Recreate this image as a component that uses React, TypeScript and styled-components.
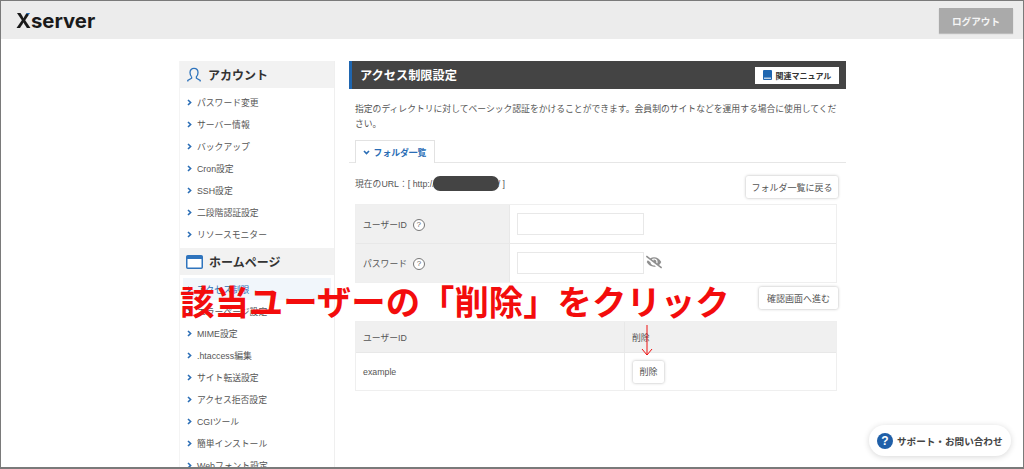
import React from 'react';
import styled, { createGlobalStyle } from 'styled-components';
import { FaEyeSlash } from 'react-icons/fa';

const accountMenu = ['パスワード変更', 'サーバー情報', 'バックアップ', 'Cron設定', 'SSH設定', '二段階認証設定', 'リソースモニター'];
const homeMenu = ['アクセス制限', 'エラーページ設定', 'MIME設定', '.htaccess編集', 'サイト転送設定', 'アクセス拒否設定', 'CGIツール', '簡単インストール', 'Webフォント設定'];

const GlobalStyle = createGlobalStyle`
  html, body {
    margin: 0;
    padding: 0;
    background: #fff;
    overflow: hidden;
  }
  * { box-sizing: border-box; }
`;

const Frame = styled.div`
  position: relative;
  width: 1024px;
  height: 469px;
  overflow: hidden;
  display: flex;
  flex-direction: column;
  background: #fff;
  border: 1px solid #7a7a7a;
  border-bottom-width: 2px;
  font-family: "Liberation Sans", "Noto Sans CJK JP", sans-serif;
  color: #555;
  font-size: 8.8px;
`;

const Header = styled.header`
  flex: none;
  height: 38px;
  background: #ececec;
  display: flex;
  align-items: center;
  justify-content: space-between;
  padding: 0 10px 0 15px;
`;

const Logo = styled.div`
  font-family: "Inter", "Liberation Sans", sans-serif;
  font-size: 20.3px;
  font-weight: 700;
  color: #1a1a1a;
`;

const LogoX = styled.span`
  background: linear-gradient(215deg, #1f66b0 0 24%, #1a1a1a 25%);
  -webkit-background-clip: text;
  background-clip: text;
  color: transparent;
`;

const LogoutButton = styled.div`
  width: 74px;
  height: 25px;
  margin-top: 1px;
  background: #aaaaaa;
  color: #f5f5f5;
  font-size: 9.6px;
  font-weight: 700;
  display: flex;
  align-items: center;
  justify-content: center;
  box-shadow: 0 1px 1px rgba(0, 0, 0, 0.2);
`;

const Body = styled.div`
  display: flex;
  align-items: flex-start;
  gap: 14px;
  padding: 22px 0 0 178px;
`;

const Sidebar = styled.nav`
  flex: none;
  width: 156px;
  border-right: 1px solid #efefef;
  border-left: 1px solid #f4f4f4;
`;

const SectionHead = styled.div`
  height: 27px;
  background: #f2f2f2;
  display: flex;
  align-items: center;
  gap: 6px;
  padding-left: 6px;
  font-size: 12px;
  font-weight: 700;
  color: #333;
`;

const MenuList = styled.ul`
  list-style: none;
  margin: 0;
  padding: 3px 0 3px;
`;

const MenuItem = styled.li<{ $active?: boolean }>`
  height: 22px;
  margin: 0 3px;
  padding-left: 4px;
  display: flex;
  align-items: center;
  gap: 5px;
  color: ${(p) => (p.$active ? '#2a6db5' : '#555')};
  background: ${(p) => (p.$active ? '#f1f6fb' : 'transparent')};
`;

const Main = styled.main`
  flex: none;
  width: 497px;
`;

const TitleBar = styled.div`
  height: 28px;
  background: #444;
  border-left: 3px solid #1f66b0;
  display: flex;
  align-items: center;
  justify-content: space-between;
  padding: 0 7px 0 8px;
  color: #fff;
  font-size: 12.2px;
  font-weight: 700;
`;

const ManualButton = styled.div`
  width: 84px;
  height: 17px;
  background: #fff;
  color: #333;
  font-size: 8px;
  font-weight: 700;
  display: flex;
  align-items: center;
  justify-content: center;
  gap: 4px;
`;

const Description = styled.p`
  margin: 13px 8px 0 6px;
  line-height: 15px;
`;

const Tabs = styled.div`
  margin-top: 8px;
  height: 23px;
  border-bottom: 1px solid #e6e6e6;
  padding-left: 6px;
`;

const Tab = styled.div`
  width: 80px;
  height: 23px;
  border: 1px solid #e2e2e2;
  border-bottom: 0;
  background: #fff;
  color: #2a6db5;
  font-weight: 700;
  display: flex;
  align-items: center;
  justify-content: center;
  gap: 5px;
`;

const UrlRow = styled.div`
  display: flex;
  justify-content: space-between;
  align-items: flex-start;
  padding: 13px 8px 0 6px;
`;

const UrlText = styled.div`
  display: flex;
  align-items: center;
  height: 15px;
`;

const Redaction = styled.span`
  display: inline-block;
  width: 66px;
  height: 15px;
  margin: 0 -1px 0 -2px;
  border-radius: 7px;
  background: #444;
`;

const Button = styled.div<{ $w: number }>`
  width: ${(p) => p.$w}px;
  height: 22px;
  background: #fff;
  border-radius: 2px;
  color: #555;
  font-size: 9px;
  display: flex;
  align-items: center;
  justify-content: center;
  box-shadow: 0 0 3px rgba(0, 0, 0, 0.3);
`;

const Table = styled.div<{ $mt: number }>`
  margin: ${(p) => p.$mt}px 9px 0 6px;
  border: 1px solid #efefef;
`;

const Row = styled.div<{ $h: number; $first: number }>`
  display: grid;
  grid-template-columns: ${(p) => p.$first}px 1fr;
  height: ${(p) => p.$h}px;
  & + & { border-top: 1px solid #e8e8e8; }
`;

const LabelCell = styled.div`
  background: #f0f0f0;
  display: flex;
  align-items: center;
  gap: 6px;
  padding-left: 7px;
  border-right: 1px solid #e8e8e8;
`;

const HeadCell = styled(LabelCell)<{ $last?: boolean }>`
  border-right: ${(p) => (p.$last ? '0' : '1px solid #e8e8e8')};
`;

const PlainCell = styled.div<{ $line?: boolean }>`
  display: flex;
  align-items: center;
  padding-left: 7px;
  border-right: ${(p) => (p.$line ? '1px solid #ececec' : '0')};
`;

const Help = styled.span`
  width: 12px;
  height: 12px;
  margin-top: 2px;
  border-radius: 50%;
  border: 1px solid #777;
  background: #fff;
  color: #666;
  font-size: 8px;
  line-height: 10px;
  text-align: center;
`;

const Input = styled.div`
  width: 127px;
  height: 22px;
  border: 1px solid #e8e8e8;
  background: #fff;
`;

const EyeIcon = styled(FaEyeSlash)`
  margin: -2px 0 0 2px;
  width: 16px;
  height: 14px;
  color: #8f8f8f;
`;

const NextRow = styled.div`
  display: flex;
  justify-content: flex-end;
  padding: 4px 8px 0 0;
`;

const DeleteButton = styled(Button)`
  margin-left: 1px;
`;

const Callout = styled.div`
  position: absolute;
  left: 179px;
  top: 277px;
  font-family: "Noto Sans CJK JP", sans-serif;
  font-size: 34.4px;
  line-height: 44px;
  font-weight: 700;
  white-space: nowrap;
  color: #f30c0c;
`;

const CalloutArrow = styled.svg`
  position: absolute;
  left: 639px;
  top: 324px;
  width: 14px;
  height: 32px;
`;

const SupportPill = styled.div`
  position: absolute;
  right: 12px;
  bottom: 11px;
  width: 142px;
  height: 31px;
  border-radius: 16px;
  background: #fff;
  box-shadow: 0 1px 6px rgba(0, 0, 0, 0.16);
  display: flex;
  align-items: center;
  gap: 4px;
  padding-left: 8px;
  font-size: 9.6px;
  font-weight: 700;
  color: #444;
`;

const SupportBadge = styled.span`
  width: 16px;
  height: 16px;
  border-radius: 50%;
  background: #1f5fa8;
  color: #fff;
  font-size: 12px;
  font-weight: 700;
  line-height: 16px;
  text-align: center;
`;

const Chevron = ({ down }: { down?: boolean }) => (
  <svg width="5" height="7" viewBox="0 0 5 7" style={down ? { transform: 'rotate(90deg)' } : undefined}>
    <path d="M1 1l2.6 2.5L1 6" fill="none" stroke="#2a6db5" strokeWidth="1.6" />
  </svg>
);

const PersonIcon = () => (
  <svg width="16" height="16" viewBox="0 0 16 16" fill="none" stroke="#2f74bd" strokeWidth="1.3">
    <path d="M5.6 9.8C4.4 8.7 4 7.3 4 5.6 4 3 5.6 1.4 8 1.4s4 1.6 4 4.2c0 1.7-.4 3.1-1.6 4.2v1.4l3.8 2.2v1.2" />
    <path d="M5.6 9.8v1.4l-3.8 2.2v1.2" />
  </svg>
);

const WindowIcon = () => (
  <svg width="17" height="14" viewBox="0 0 17 14">
    <rect x="0.75" y="0.75" width="15.5" height="12.5" rx="1" fill="#fff" stroke="#2f74bd" strokeWidth="1.5" />
    <rect x="1" y="1" width="15" height="3" fill="#2f74bd" />
  </svg>
);

const BookIcon = () => (
  <svg width="9" height="10" viewBox="0 0 9 10">
    <rect width="9" height="10" rx="1" fill="#1f66b0" />
    <rect x="1" y="7.6" width="7" height="1.2" fill="#dce8f4" />
  </svg>
);

export default function App() {
  return (
    <>
      <GlobalStyle />
      <Frame>
        <Header>
          <Logo><LogoX>X</LogoX>server</Logo>
          <LogoutButton>ログアウト</LogoutButton>
        </Header>
        <Body>
          <Sidebar>
            <SectionHead><PersonIcon />アカウント</SectionHead>
            <MenuList>
              {accountMenu.map((m) => (
                <MenuItem key={m}><Chevron />{m}</MenuItem>
              ))}
            </MenuList>
            <SectionHead><WindowIcon />ホームページ</SectionHead>
            <MenuList>
              {homeMenu.map((m, i) => (
                <MenuItem key={m} $active={i === 0}><Chevron />{m}</MenuItem>
              ))}
            </MenuList>
          </Sidebar>
          <Main>
            <TitleBar>
              アクセス制限設定
              <ManualButton><BookIcon />関連マニュアル</ManualButton>
            </TitleBar>
            <Description>
              指定のディレクトリに対してベーシック認証をかけることができます。会員制のサイトなどを運用する場合に使用してください。
            </Description>
            <Tabs>
              <Tab><Chevron down />フォルダ一覧</Tab>
            </Tabs>
            <UrlRow>
              <UrlText>現在のURL：[ http://<Redaction />/ ]</UrlText>
              <Button $w={92}>フォルダ一覧に戻る</Button>
            </UrlRow>
            <Table $mt={6}>
              <Row $h={38} $first={154}>
                <LabelCell>ユーザーID<Help>?</Help></LabelCell>
                <PlainCell><Input /></PlainCell>
              </Row>
              <Row $h={39} $first={154}>
                <LabelCell>パスワード<Help>?</Help></LabelCell>
                <PlainCell><Input /><EyeIcon /></PlainCell>
              </Row>
            </Table>
            <NextRow><Button $w={79}>確認画面へ進む</Button></NextRow>
            <Table $mt={12}>
              <Row $h={30} $first={269}>
                <HeadCell>ユーザーID</HeadCell>
                <HeadCell $last>削除</HeadCell>
              </Row>
              <Row $h={38} $first={269}>
                <PlainCell $line>example</PlainCell>
                <PlainCell><DeleteButton $w={31}>削除</DeleteButton></PlainCell>
              </Row>
            </Table>
          </Main>
        </Body>
        <Callout>該当ユーザーの「削除」をクリック</Callout>
        <CalloutArrow viewBox="0 0 14 32">
          <path d="M7 0v30M2 24l5 6 5-6" fill="none" stroke="#ee1111" strokeWidth="1" />
        </CalloutArrow>
        <SupportPill><SupportBadge>?</SupportBadge>サポート・お問い合わせ</SupportPill>
      </Frame>
    </>
  );
}
